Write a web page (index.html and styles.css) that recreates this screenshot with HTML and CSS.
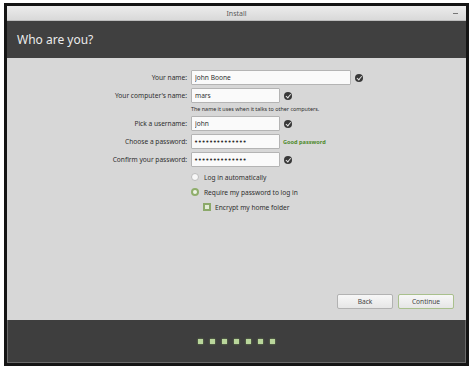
FILE: index.html
```html
<!DOCTYPE html>
<html lang="en">
<head>
    <meta charset="UTF-8">
    <meta name="viewport" content="width=device-width, initial-scale=1.0">
    <title>Install</title>
    <link rel="stylesheet" href="styles.css">
</head>
<body>
    <div class="window">
        <div class="titlebar">
            <span class="title">Install</span>
            <span class="minimize"></span>
        </div>
        <div class="header">Who are you?</div>

        <div class="content">
            <div class="form">
                <label class="label">Your name:</label>
                <div class="field">
                    <input type="text" class="text-input wide" value="John Boone">
                    <span class="check"></span>
                </div>

                <label class="label">Your computer's name:</label>
                <div class="field">
                    <input type="text" class="text-input" value="mars">
                    <span class="check"></span>
                </div>

                <span></span>
                <div class="hint">The name it uses when it talks to other computers.</div>

                <label class="label">Pick a username:</label>
                <div class="field">
                    <input type="text" class="text-input" value="john">
                    <span class="check"></span>
                </div>

                <label class="label">Choose a password:</label>
                <div class="field">
                    <input type="password" class="text-input" value="johnboone12345">
                    <span class="strength">Good password</span>
                </div>

                <label class="label">Confirm your password:</label>
                <div class="field">
                    <input type="password" class="text-input" value="johnboone12345">
                    <span class="check"></span>
                </div>

                <span></span>
                <div class="options">
                    <div class="option"><span class="radio"></span>Log in automatically</div>
                    <div class="option"><span class="radio on"></span>Require my password to log in</div>
                    <div class="option sub"><span class="checkbox"></span>Encrypt my home folder</div>
                </div>
            </div>

            <div class="buttons">
                <button class="btn">Back</button>
                <button class="btn primary">Continue</button>
            </div>
        </div>

        <div class="footer">
            <span class="dot"></span>
            <span class="dot"></span>
            <span class="dot"></span>
            <span class="dot"></span>
            <span class="dot"></span>
            <span class="dot"></span>
            <span class="dot"></span>
        </div>
    </div>
</body>
</html>
```

FILE: styles.css
```css
body {
    margin: 0;
    background: #fff;
    font-family: "Noto Sans", "DejaVu Sans", sans-serif;
}
.window {
    box-sizing: border-box;
    width: 465px;
    height: 363px;
    margin: 3px 0 0 4px;
    border: 3px solid #141414;
    display: flex;
    flex-direction: column;
    background: #d7d7d7;
}
.titlebar {
    height: 15px;
    flex-shrink: 0;
    display: flex;
    align-items: center;
    justify-content: center;
    position: relative;
    background: linear-gradient(#ececec, #d9d9d9);
    border-bottom: 1px solid #bdbdbd;
    box-sizing: border-box;
}
.title {
    font-size: 7px;
    color: #5a5a5a;
}
.minimize {
    position: absolute;
    right: 8px;
    top: 7px;
    width: 5px;
    height: 1px;
    background: #777;
}
.header {
    height: 37px;
    flex-shrink: 0;
    display: flex;
    align-items: center;
    padding-left: 10px;
    background: #404040;
    color: #ececec;
    font-size: 12px;
}
.content {
    flex: 1;
    display: flex;
    flex-direction: column;
    padding: 12px 12px 11px 0;
}
.form {
    display: grid;
    grid-template-columns: 180px auto;
    column-gap: 4px;
    align-items: center;
}
.label {
    text-align: right;
    font-size: 6.6px;
    color: #2e2e2e;
    margin-bottom: 3px;
}
.field {
    display: flex;
    align-items: center;
    gap: 4px;
    height: 15px;
    margin-bottom: 3px;
}
.text-input {
    box-sizing: border-box;
    width: 89px;
    height: 15px;
    padding: 0 3px;
    border: 1px solid #b4b4b4;
    border-radius: 1px;
    background: #fafafa;
    font-family: inherit;
    font-size: 6.6px;
    color: #2e2e2e;
    outline: none;
}
.text-input.wide {
    width: 160px;
}
.text-input[type="password"] {
    font-family: "DejaVu Sans", sans-serif;
    font-size: 7px;
    letter-spacing: -0.4px;
    padding-left: 2px;
}
.check {
    position: relative;
    width: 8px;
    height: 8px;
    border-radius: 50%;
    background: #383838;
}
.check::after {
    content: "";
    position: absolute;
    left: 2.6px;
    top: 1.3px;
    width: 1.8px;
    height: 3.6px;
    border: solid #e8e8e8;
    border-width: 0 1.2px 1.2px 0;
    transform: rotate(40deg);
}
.strength {
    margin-left: -1px;
    font-size: 5.6px;
    font-weight: bold;
    color: #4f8a2c;
}
.hint {
    height: 7px;
    line-height: 7px;
    font-size: 5.4px;
    color: #2e2e2e;
    margin-bottom: 3px;
}
.options {
    display: flex;
    flex-direction: column;
    gap: 3px;
    margin-top: 1px;
}
.option {
    display: flex;
    align-items: center;
    gap: 5px;
    height: 12px;
    font-size: 6.6px;
    color: #2e2e2e;
}
.option.sub {
    padding-left: 12px;
    gap: 4px;
}
.radio {
    box-sizing: border-box;
    width: 8px;
    height: 8px;
    border-radius: 50%;
    border: 1px solid #bcbcbc;
    background: #f7f7f7;
}
.radio.on {
    border: 2px solid #8fae6c;
    background: #eef3e6;
}
.checkbox {
    box-sizing: border-box;
    width: 8px;
    height: 8px;
    border: 2px solid #8ba96a;
    background: #e4ecd8;
}
.buttons {
    margin-top: auto;
    display: flex;
    justify-content: flex-end;
    gap: 5px;
}
.btn {
    box-sizing: border-box;
    width: 56px;
    height: 15px;
    padding: 0;
    border: 1px solid #b2b2b2;
    border-radius: 2px;
    background: linear-gradient(#f7f7f7, #e6e6e6);
    font-family: inherit;
    font-size: 6.6px;
    color: #444;
}
.btn.primary {
    border-color: #a9c08d;
}
.footer {
    height: 43px;
    flex-shrink: 0;
    box-sizing: border-box;
    display: flex;
    align-items: center;
    justify-content: center;
    gap: 7px;
    background: #3e3e3e;
    border: 1px solid #6a6a6a;
    border-top: none;
}
.dot {
    width: 5px;
    height: 5px;
    background: #b9d69b;
    box-shadow: 0 0 2px #7da15a;
}
```
